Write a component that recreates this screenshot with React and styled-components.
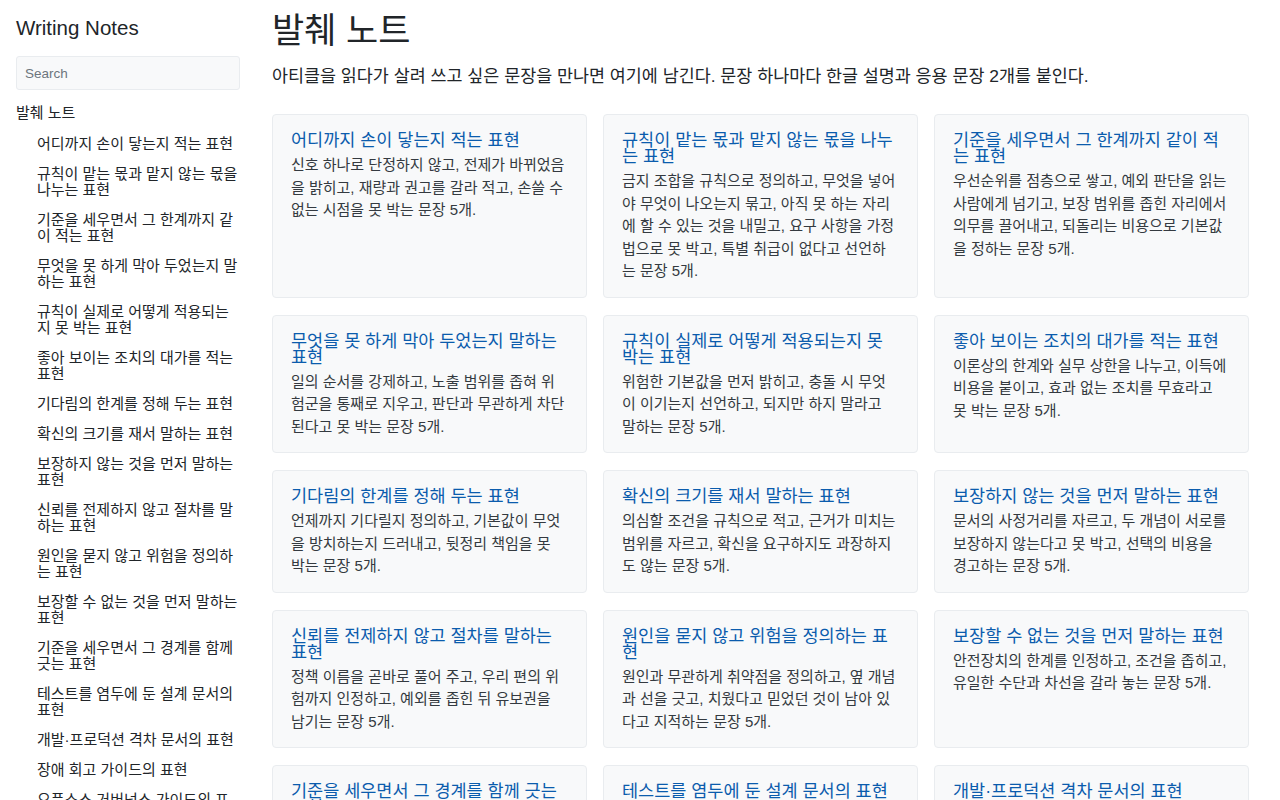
import React from "react";
import styled, { createGlobalStyle } from "styled-components";

const Global = createGlobalStyle`
  * { box-sizing: border-box; }
  body {
    margin: 0;
    background: #ffffff;
    color: #212529;
    font-family: "Liberation Sans", "Noto Sans CJK KR", sans-serif;
  }
`;

const Layout = styled.div`
  display: flex;
  gap: 32px;
  padding: 0 31px 16px 16px;
  align-items: flex-start;
`;

const Sidebar = styled.aside`
  width: 224px;
  flex: 0 0 224px;
  padding-top: 14px;
`;

const Brand = styled.div`
  font-size: 20.5px;
  line-height: 28px;
  color: #212529;
  margin-bottom: 14px;
`;

const Search = styled.input`
  display: block;
  width: 100%;
  height: 34px;
  padding: 0 8px;
  border: 1px solid #e9ecef;
  border-radius: 3px;
  background: #f8f9fa;
  font-family: inherit;
  font-size: 13.5px;
  color: #212529;
  outline: none;
  &::placeholder { color: #6c757d; }
`;

const NavSection = styled.div`
  margin-top: 14px;
  font-size: 15px;
  line-height: 18px;
  color: #212529;
`;

const NavList = styled.ul`
  list-style: none;
  margin: 14px 0 0 0;
  padding: 0 0 0 21px;
  display: flex;
  flex-direction: column;
  gap: 14px;
`;

const NavItem = styled.li`
  font-size: 15px;
  line-height: 16px;
  color: #212529;
`;

const Main = styled.main`
  flex: 1;
  min-width: 0;
`;

const PageTitle = styled.h1`
  margin: 10px 0 0 0;
  font-size: 35px;
  font-weight: 400;
  line-height: 42px;
  color: #212529;
`;

const Lead = styled.p`
  margin: 11px 0 25px 0;
  font-size: 17.4px;
  line-height: 26px;
  color: #212529;
`;

const Grid = styled.div`
  display: grid;
  grid-template-columns: repeat(3, 1fr);
  gap: 17px 16px;
`;

const Card = styled.article`
  background: #f8f9fa;
  border: 1px solid #e9ecef;
  border-radius: 4px;
  padding: 17px 18px 14px 18px;
`;

const CardTitle = styled.h3`
  margin: 0 0 6px 0;
  font-size: 17.5px;
  font-weight: 400;
  line-height: 16px;
  color: #0b5cad;
`;

const CardBody = styled.p`
  margin: 0;
  font-size: 15px;
  line-height: 22.5px;
  color: #343a40;
`;

const notes = [
  ["어디까지 손이 닿는지 적는 표현", "신호 하나로 단정하지 않고, 전제가 바뀌었음을 밝히고, 재량과 권고를 갈라 적고, 손쓸 수 없는 시점을 못 박는 문장 5개."],
  ["규칙이 맡는 몫과 맡지 않는 몫을 나누는 표현", "금지 조합을 규칙으로 정의하고, 무엇을 넣어야 무엇이 나오는지 묶고, 아직 못 하는 자리에 할 수 있는 것을 내밀고, 요구 사항을 가정법으로 못 박고, 특별 취급이 없다고 선언하는 문장 5개."],
  ["기준을 세우면서 그 한계까지 같이 적는 표현", "우선순위를 점층으로 쌓고, 예외 판단을 읽는 사람에게 넘기고, 보장 범위를 좁힌 자리에서 의무를 끌어내고, 되돌리는 비용으로 기본값을 정하는 문장 5개."],
  ["무엇을 못 하게 막아 두었는지 말하는 표현", "일의 순서를 강제하고, 노출 범위를 좁혀 위험군을 통째로 지우고, 판단과 무관하게 차단된다고 못 박는 문장 5개."],
  ["규칙이 실제로 어떻게 적용되는지 못 박는 표현", "위험한 기본값을 먼저 밝히고, 충돌 시 무엇이 이기는지 선언하고, 되지만 하지 말라고 말하는 문장 5개."],
  ["좋아 보이는 조치의 대가를 적는 표현", "이론상의 한계와 실무 상한을 나누고, 이득에 비용을 붙이고, 효과 없는 조치를 무효라고 못 박는 문장 5개."],
  ["기다림의 한계를 정해 두는 표현", "언제까지 기다릴지 정의하고, 기본값이 무엇을 방치하는지 드러내고, 뒷정리 책임을 못 박는 문장 5개."],
  ["확신의 크기를 재서 말하는 표현", "의심할 조건을 규칙으로 적고, 근거가 미치는 범위를 자르고, 확신을 요구하지도 과장하지도 않는 문장 5개."],
  ["보장하지 않는 것을 먼저 말하는 표현", "문서의 사정거리를 자르고, 두 개념이 서로를 보장하지 않는다고 못 박고, 선택의 비용을 경고하는 문장 5개."],
  ["신뢰를 전제하지 않고 절차를 말하는 표현", "정책 이름을 곧바로 풀어 주고, 우리 편의 위험까지 인정하고, 예외를 좁힌 뒤 유보권을 남기는 문장 5개."],
  ["원인을 묻지 않고 위험을 정의하는 표현", "원인과 무관하게 취약점을 정의하고, 옆 개념과 선을 긋고, 치웠다고 믿었던 것이 남아 있다고 지적하는 문장 5개."],
  ["보장할 수 없는 것을 먼저 말하는 표현", "안전장치의 한계를 인정하고, 조건을 좁히고, 유일한 수단과 차선을 갈라 놓는 문장 5개."],
  ["기준을 세우면서 그 경계를 함께 긋는 표현", "적용 범위를 먼저 정하고, 경계 밖의 경우를 따로 적고, 기준이 닿지 않는 자리를 밝히는 문장 5개."],
  ["테스트를 염두에 둔 설계 문서의 표현", "검증할 수 있는 단위로 요구를 나누고, 실패 조건을 먼저 적고, 확인 방법을 함께 두는 문장 5개."],
  ["개발·프로덕션 격차 문서의 표현", "환경마다 다른 점을 드러내고, 같다고 믿기 쉬운 부분을 짚고, 차이를 줄이는 방법을 적는 문장 5개."],
  ["장애 회고 가이드의 표현", "비난 없이 경과를 적고, 원인과 기여 요인을 나누고, 다음 행동을 못 박는 문장 5개."],
  ["오픈소스 거버넌스 가이드의 표현", "결정 권한을 밝히고, 기여 절차를 정하고, 분쟁을 푸는 방법을 적는 문장 5개."],
];

export default function App() {
  return (
    <>
      <Global />
      <Layout>
        <Sidebar>
          <Brand>Writing Notes</Brand>
          <Search placeholder="Search" />
          <NavSection>발췌 노트</NavSection>
          <NavList>
            {notes.map(([t]) => (
              <NavItem key={t}>{t}</NavItem>
            ))}
          </NavList>
        </Sidebar>
        <Main>
          <PageTitle>발췌 노트</PageTitle>
          <Lead>
            아티클을 읽다가 살려 쓰고 싶은 문장을 만나면 여기에 남긴다. 문장 하나마다 한글 설명과 응용 문장 2개를 붙인다.
          </Lead>
          <Grid>
            {notes.map(([t, b]) => (
              <Card key={t}>
                <CardTitle>{t}</CardTitle>
                <CardBody>{b}</CardBody>
              </Card>
            ))}
          </Grid>
        </Main>
      </Layout>
    </>
  );
}
